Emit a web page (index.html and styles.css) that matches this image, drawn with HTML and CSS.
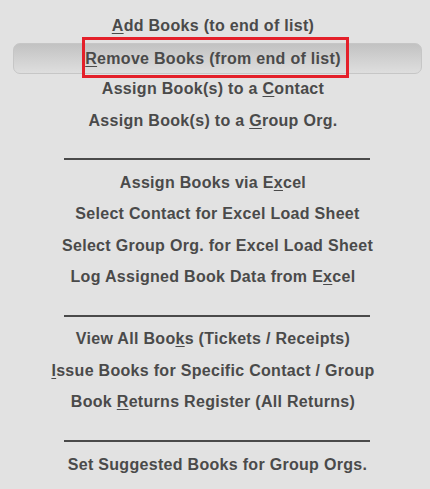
FILE: index.html
```html
<!DOCTYPE html>
<html>
<head>
<meta charset="utf-8">
<link rel="stylesheet" href="styles.css">
</head>
<body>
<div class="menu">
  <div class="item key"><span><u>A</u>dd Books (to end of list)</span></div>
  <div class="item key active"><span><u>R</u>emove Books (from end of list)</span></div>
  <div class="item key"><span>Assign Book(s) to a <u>C</u>ontact</span></div>
  <div class="item key"><span>Assign Book(s) to a <u>G</u>roup Org.</span></div>
  <div class="sep"></div>
  <div class="item key"><span>Assign Books via E<u>x</u>cel</span></div>
  <div class="item"><span>Select Contact for Excel Load Sheet</span></div>
  <div class="item"><span>Select Group Org. for Excel Load Sheet</span></div>
  <div class="item key"><span>Log Assigned Book Data from E<u>x</u>cel</span></div>
  <div class="sep"></div>
  <div class="item key"><span>View All Boo<u>k</u>s (Tickets / Receipts)</span></div>
  <div class="item key"><span><u>I</u>ssue Books for Specific Contact / Group</span></div>
  <div class="item key"><span>Book <u>R</u>eturns Register (All Returns)</span></div>
  <div class="sep last"></div>
  <div class="item"><span>Set Suggested Books for Group Orgs.</span></div>
</div>
</body>
</html>
```
FILE: styles.css
```css
html, body {
  margin: 0;
  padding: 0;
  background: #e2e2e2;
}
body {
  width: 430px;
  height: 489px;
  overflow: hidden;
  font-family: "Liberation Sans", Arial, sans-serif;
  font-weight: bold;
  font-size: 16px;
  letter-spacing: 0.3px;
  color: #4a4a4a;
}
.menu {
  display: flex;
  flex-direction: column;
  padding-top: 10px;
}
.item {
  height: 31.5px;
  display: flex;
  align-items: center;
  justify-content: center;
  margin: 0 8px 0 13px;
  padding-top: 1px;
  box-sizing: border-box;
}
.item.key {
  padding-right: 9px;
}
.item span {
  line-height: 18px;
  white-space: nowrap;
}
.item u {
  text-underline-offset: 2px;
}
.item.active {
  position: relative;
  height: 31px;
  margin-top: 1px;
  margin-bottom: -0.5px;
  border: 1px solid #c6c6c6;
  border-radius: 7px;
  background: linear-gradient(to bottom, #c2c2c2 0%, #d2d2d2 55%, #dedede 100%);
}
.item.active::after {
  content: "";
  position: absolute;
  left: 68px;
  top: -6.5px;
  width: 267px;
  height: 41px;
  box-sizing: border-box;
  border: 3px solid #e4202a;
}
.sep {
  height: 30.5px;
  display: flex;
  flex-direction: column;
  justify-content: flex-end;
  box-sizing: border-box;
  padding: 0 60px 6.5px 64px;
}
.sep::before {
  content: "";
  display: block;
  height: 2px;
  background: #4a4a4a;
}
.sep.last {
  height: 31.5px;
  padding-bottom: 7.5px;
}
```
